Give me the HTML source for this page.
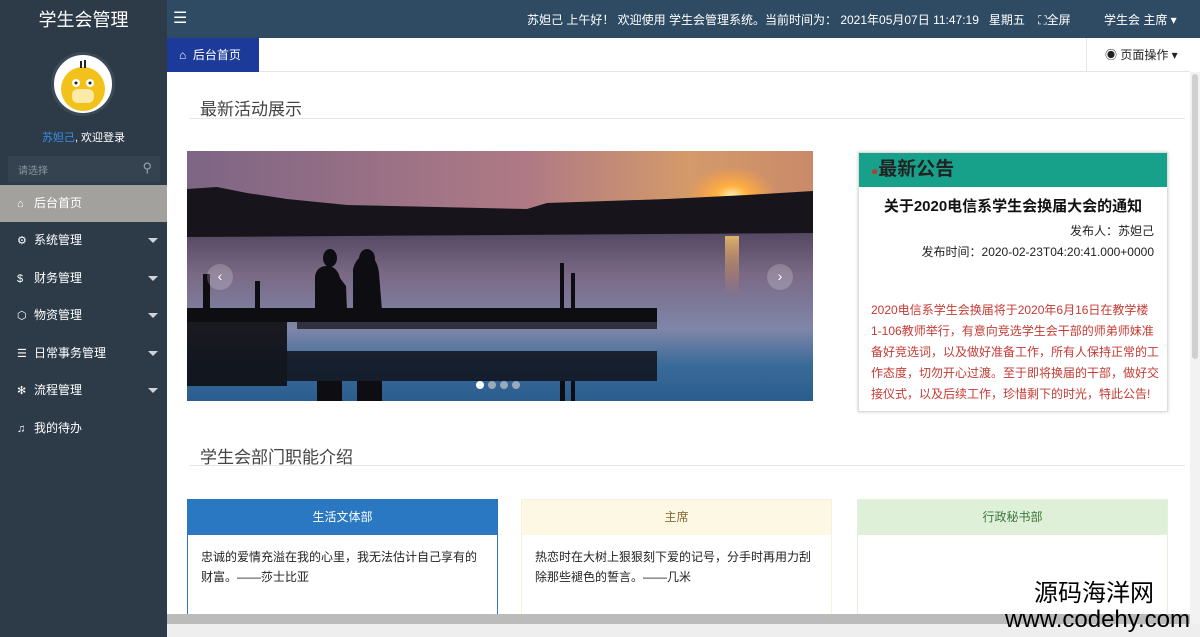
<!DOCTYPE html>
<html><head><meta charset="utf-8"><style>
*{margin:0;padding:0;box-sizing:border-box}
body{width:1200px;height:637px;overflow:hidden;background:#fff;font-family:"Liberation Sans","Noto Sans CJK SC",sans-serif;position:relative}
.side{position:absolute;left:0;top:0;width:167px;height:637px;background:#2d3a48}
.logo{position:absolute;left:0;top:6px;width:167px;text-align:center;color:#fff;font-size:18px}
.avatar{position:absolute;left:51px;top:52px;width:64px;height:64px;border-radius:50%;background:#fff;border:3px solid #3c4a58;overflow:hidden}
.welcome{position:absolute;top:129px;width:167px;text-align:center;font-size:11px;color:#fff}
.welcome b{color:#3a8ee6;font-weight:normal}
.search{position:absolute;left:8px;top:156px;width:152px;height:26px;background:#34434f;color:#8a96a0;font-size:10px;padding:6px 10px}
.menu{position:absolute;left:0;width:167px;height:37px;color:#fff;font-size:12px;line-height:37px;padding-left:17px}
.menu.act{background:#a3a19e}
.menu .ic{display:inline-block;width:13px;margin-right:4px;font-size:11px}
.menu .ar{position:absolute;right:9px;top:16px;border:5px solid transparent;border-top:5px solid #cfd4d9;border-bottom:0}
.top{position:absolute;left:167px;top:0;width:1033px;height:38px;background:#2f4b64;color:#fff;font-size:12px}
.tabbar{position:absolute;left:167px;top:38px;width:1023px;height:34px;background:#fff;border-bottom:1px solid #e5e5e5}
.tab{position:absolute;left:0;top:0;width:92px;height:34px;background:#1b3a9a;color:#fff;font-size:12px;line-height:34px;padding-left:12px}
.ops{position:absolute;right:0;top:0;width:104px;height:34px;border-left:1px solid #e5e5e5;font-size:12px;line-height:34px;padding-left:18px;color:#222}
.h2{position:absolute;font-size:17px;color:#444}
.line{position:absolute;height:1px;background:#e6e6e6}
.car{position:absolute;left:187px;top:151px;width:626px;height:250px;overflow:hidden}
.arr{position:absolute;top:113px;width:26px;height:26px;border-radius:50%;background:rgba(255,255,255,.2);color:#fff;text-align:center;line-height:25px;font-size:14px}
.dots{position:absolute;left:287px;top:225px}
.dots i{display:inline-block;width:8px;height:8px;border-radius:50%;background:#9ab;margin:0 2px}
.dots i:first-child{background:#fff}
.notice{position:absolute;left:858px;top:152px;width:310px;height:260px;border:1px solid #ddd;box-shadow:0 0 3px #ccc;background:#fff}
.nh{height:34px;background:#17a08a;color:#222;font-size:19px;line-height:34px;padding-left:12px;font-weight:bold}
.ntitle{text-align:center;font-size:15px;font-weight:bold;margin-top:8px;color:#111}
.nmeta{text-align:right;font-size:12px;padding-right:13px;color:#222;line-height:21px}
.nbody{color:#c43a33;font-size:12px;line-height:21px;padding:0 0 0 12px;margin-top:37px;white-space:nowrap}
.card{position:absolute;top:499px;width:311px;height:120px;border:1px solid #ddd;background:#fff}
.card .hd{height:35px;text-align:center;line-height:35px;font-size:12px}
.card .bd{padding:12px 13px;font-size:12px;line-height:20px;color:#222}
.vs{position:absolute;left:1190px;top:72px;width:10px;height:565px;background:#f2f2f2}
.vs i{position:absolute;left:2px;top:2px;width:6px;height:285px;background:#d0d0d0;border-radius:3px}
.hs{position:absolute;left:167px;top:614px;width:1023px;height:10px;background:#bbb}
.hsb{position:absolute;left:167px;top:624px;width:1033px;height:13px;background:#eee}
.wm{position:absolute;right:10px;top:582px;text-align:right;color:#000;line-height:1}
</style></head><body>
<div class="side">
<div class="logo">学生会管理</div>
<div class="avatar"><svg width="58" height="58" viewBox="0 0 58 58"><circle cx="29" cy="34" r="22" fill="#f2c21b"/><rect x="26" y="6" width="2" height="7" fill="#222"/><rect x="30" y="5" width="2" height="8" fill="#222"/><circle cx="22" cy="28" r="4" fill="#fff"/><circle cx="36" cy="28" r="4" fill="#fff"/><circle cx="22" cy="28" r="1.5" fill="#222"/><circle cx="36" cy="28" r="1.5" fill="#222"/><rect x="18" y="34" width="22" height="14" rx="6" fill="#fbe9a8"/></svg></div>
<div class="welcome"><b>苏妲己</b>, 欢迎登录</div>
<div class="search">请选择<span style="position:absolute;right:8px;top:4px;color:#9aa5ae;font-size:13px">&#9906;</span></div>
<div class="menu act" style="top:185px"><span class="ic">⌂</span>后台首页</div>
<div class="menu" style="top:222px"><span class="ic">⚙</span>系统管理<i class="ar"></i></div>
<div class="menu" style="top:260px"><span class="ic">$</span>财务管理<i class="ar"></i></div>
<div class="menu" style="top:297px"><span class="ic">⬡</span>物资管理<i class="ar"></i></div>
<div class="menu" style="top:335px"><span class="ic">☰</span>日常事务管理<i class="ar"></i></div>
<div class="menu" style="top:372px"><span class="ic">✻</span>流程管理<i class="ar"></i></div>
<div class="menu" style="top:410px"><span class="ic">♫</span>我的待办</div>
</div>
<div class="top">
<span style="position:absolute;left:6px;top:8px;font-size:16px">☰</span>
<span style="position:absolute;left:360px;top:11px">苏妲己 上午好！ 欢迎使用 学生会管理系统。当前时间为： 2021年05月07日 11:47:19 &nbsp; 星期五 &nbsp;&nbsp; ⛶全屏</span>
<span style="position:absolute;left:937px;top:11px">学生会 主席 ▾</span>
</div>
<div class="tabbar"><div class="tab">⌂ &nbsp;后台首页</div><div class="ops">◉ 页面操作 ▾</div></div>
<div class="h2" style="left:200px;top:95px">最新活动展示</div>
<div class="line" style="left:190px;top:118px;width:995px"></div>
<div class="car">
<svg width="626" height="250" viewBox="0 0 626 250">
<defs>
<linearGradient id="sky" x1="0" y1="0" x2="1" y2="0"><stop offset="0" stop-color="#7d6585"/><stop offset=".55" stop-color="#b07a85"/><stop offset=".8" stop-color="#d49a6a"/><stop offset="1" stop-color="#c98a6a"/></linearGradient>
<linearGradient id="wat" x1="0" y1="0" x2="0" y2="1"><stop offset="0" stop-color="#4a3e58"/><stop offset=".3" stop-color="#7a6a86"/><stop offset=".6" stop-color="#7f86a8"/><stop offset=".8" stop-color="#3a6a9a"/><stop offset="1" stop-color="#2a5d8e"/></linearGradient>
<radialGradient id="sun" cx=".5" cy=".5" r=".5"><stop offset="0" stop-color="#fff0b0"/><stop offset=".35" stop-color="#ffb040"/><stop offset="1" stop-color="#ffa040" stop-opacity="0"/></radialGradient>
<linearGradient id="rf" x1="0" y1="0" x2="0" y2="1"><stop offset="0" stop-color="#ffcc70"/><stop offset="1" stop-color="#e08040" stop-opacity="0"/></linearGradient>
</defs>
<rect width="626" height="80" fill="url(#sky)"/>
<ellipse cx="545" cy="45" rx="45" ry="30" fill="url(#sun)"/>
<rect y="70" width="626" height="180" fill="url(#wat)"/>
<rect x="538" y="85" width="14" height="60" fill="url(#rf)" opacity=".8"/>
<path d="M0 38 L30 36 60 42 100 48 160 54 250 56 340 58 360 52 420 50 480 48 520 46 560 44 626 40 L626 82 0 86Z" fill="#17141c"/>
<g fill="#0e0d12">
<rect x="0" y="157" width="470" height="14"/>
<rect x="0" y="165" width="100" height="70" opacity=".9"/>
<rect x="110" y="168" width="360" height="10" opacity=".7"/>
<rect x="100" y="200" width="370" height="30" opacity=".8"/>
<rect x="16" y="123" width="7" height="40"/><rect x="68" y="130" width="5" height="30"/>
<rect x="373" y="112" width="4" height="50"/><rect x="384" y="122" width="4" height="40"/>
<path d="M128 160 L128 125 q2-10 12-10 q10 0 13 12 l6 8 L160 160Z"/><ellipse cx="143" cy="107" rx="7" ry="9"/>
<path d="M166 160 L166 118 q4-14 14-14 q10 2 12 18 L195 160Z"/><ellipse cx="180" cy="108" rx="8" ry="10"/>
<rect x="130" y="230" width="25" height="20"/><rect x="170" y="230" width="25" height="50"/>
<rect x="373" y="230" width="5" height="45"/><rect x="384" y="230" width="4" height="45"/>
</g>
</svg>
<div class="arr" style="left:20px">‹</div><div class="arr" style="left:580px">›</div>
<div class="dots"><i></i><i></i><i></i><i></i></div></div>
<div class="notice"><div class="nh"><span style="color:#c0392b;font-size:12px">●</span>最新公告</div>
<div class="ntitle">关于2020电信系学生会换届大会的通知</div>
<div class="nmeta" style="margin-top:5px">发布人：苏妲己</div>
<div class="nmeta">发布时间：2020-02-23T04:20:41.000+0000</div>
<div class="nbody">2020电信系学生会换届将于2020年6月16日在教学楼<br>1-106教师举行，有意向竞选学生会干部的师弟师妹准<br>备好竞选词，以及做好准备工作，所有人保持正常的工<br>作态度，切勿开心过渡。至于即将换届的干部，做好交<br>接仪式，以及后续工作，珍惜剩下的时光，特此公告!</div></div>
<div class="h2" style="left:200px;top:443px">学生会部门职能介绍</div>
<div class="line" style="left:190px;top:465px;width:995px"></div>
<div class="card" style="left:187px;border-color:#2d76bf"><div class="hd" style="background:#2b78c2;color:#fff">生活文体部</div><div class="bd">忠诚的爱情充溢在我的心里，我无法估计自己享有的财富。——莎士比亚</div></div>
<div class="card" style="left:521px;border-color:#f6f2d8"><div class="hd" style="background:#fcf8e3;color:#8a6d3b">主席</div><div class="bd">热恋时在大树上狠狠刻下爱的记号，分手时再用力刮除那些褪色的誓言。——几米</div></div>
<div class="card" style="left:857px;border-color:#e4efdc"><div class="hd" style="background:#dff0d8;color:#3c763d">行政秘书部</div><div class="bd"></div></div>
<div class="vs"><i></i></div>
<div class="hs"></div><div class="hsb"></div>
<div class="wm"><div style="font-size:24px;margin-right:36px">源码海洋网</div><div style="font-size:24px;margin-top:2px">www.codehy.com</div></div>
</body></html>
